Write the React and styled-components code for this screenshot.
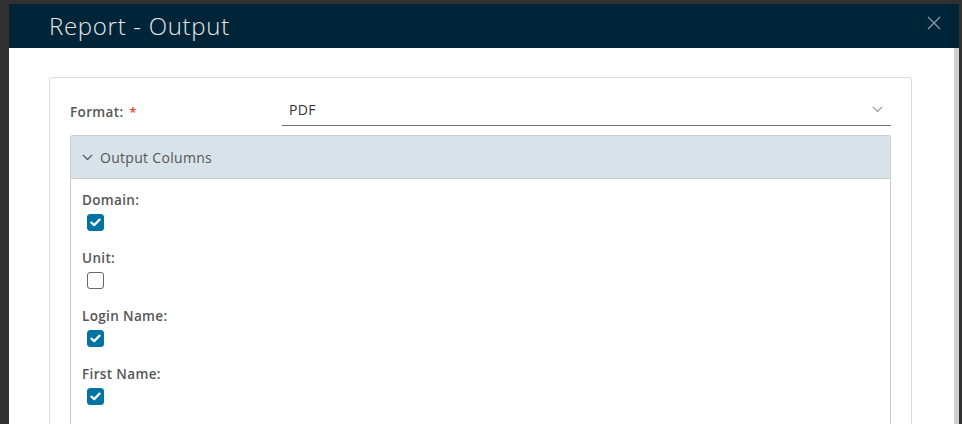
import React from "react";
import styled, { createGlobalStyle } from "styled-components";

const GlobalStyle = createGlobalStyle`
  html, body {
    margin: 0;
    padding: 0;
    background: #313131;
    height: 100%;
    overflow: hidden;
  }
  body {
    font-family: "Open Sans", "Noto Sans", sans-serif;
  }
`;

const columns = [
  { label: "Domain:", checked: true },
  { label: "Unit:", checked: false },
  { label: "Login Name:", checked: true },
  { label: "First Name:", checked: true },
];

const CheckIcon = () => (
  <svg width="11" height="9" viewBox="0 0 10 8" fill="none">
    <path
      d="M1.3 4.1 L3.8 6.4 L8.7 1.4"
      stroke="#fff"
      strokeWidth="2"
      strokeLinecap="round"
      strokeLinejoin="round"
    />
  </svg>
);

const Chevron = ({ size = 10, color = "#565656" }) => (
  <svg width={size} height={size * 0.6} viewBox="0 0 10 6" fill="none">
    <path d="M0.8 0.8 L5 5 L9.2 0.8" stroke={color} strokeWidth="1.2" />
  </svg>
);

const App = () => {
  return (
    <>
      <GlobalStyle />
      <Modal>
        <Header>
          <Title>Report - Output</Title>
          <Close aria-label="close">
            <svg width="14" height="14" viewBox="0 0 14 14">
              <path d="M1 1 L13 13 M13 1 L1 13" stroke="#8a969d" strokeWidth="1.4" />
            </svg>
          </Close>
        </Header>
        <Body>
          <Content>
            <Card>
              <FormRow>
                <Label>
                  Format: <Required>*</Required>
                </Label>
                <Select>
                  <span>PDF</span>
                  <Chevron size={11} color="#9aa5ab" />
                </Select>
              </FormRow>
              <Accordion>
                <AccordionHeader>
                  <Chevron size={11} />
                  <span>Output Columns</span>
                </AccordionHeader>
                <AccordionBody>
                  {columns.map((c) => (
                    <Field key={c.label}>
                      <FieldLabel>{c.label}</FieldLabel>
                      <Checkbox $checked={c.checked}>
                        {c.checked && <CheckIcon />}
                      </Checkbox>
                    </Field>
                  ))}
                </AccordionBody>
              </Accordion>
            </Card>
          </Content>
          <ScrollTrack />
        </Body>
      </Modal>
    </>
  );
};

export default App;

const Modal = styled.div`
  margin: 4px 0 0 9px;
  width: 950px;
  height: 420px;
  display: flex;
  flex-direction: column;
  background: #fff;
`;

const Header = styled.div`
  height: 44px;
  flex-shrink: 0;
  background: #002538;
  display: flex;
  align-items: center;
  justify-content: space-between;
  padding: 0 18px 0 40px;
`;

const Title = styled.h3`
  margin: 0 0 2px;
  font-weight: 300;
  font-size: 24px;
  color: #e8e8e8;
  letter-spacing: 0.7px;
`;

const Close = styled.div`
  display: flex;
  align-items: center;
  margin-top: -6px;
`;

const Body = styled.div`
  flex: 1;
  display: flex;
  overflow: hidden;
`;

const Content = styled.div`
  flex: 1;
  display: flex;
  padding: 29px 42px 0 40px;
`;

const ScrollTrack = styled.div`
  width: 5px;
  background: #d0d0d0;
`;

const Card = styled.div`
  flex: 1;
  display: flex;
  flex-direction: column;
  border: 1px solid #dcdcdc;
  border-bottom: none;
  border-radius: 3px 3px 0 0;
  padding: 12px 20px 0 20px;
`;

const FormRow = styled.div`
  display: flex;
  align-items: flex-end;
  height: 36px;
`;

const Label = styled.label`
  width: 212px;
  font-size: 13.5px;
  font-weight: 600;
  letter-spacing: 0.35px;
  color: #565656;
  padding-bottom: 5px;
`;

const Required = styled.span`
  color: #e12200;
  font-weight: 400;
  margin-left: 2px;
`;

const Select = styled.div`
  flex: 1;
  display: flex;
  align-items: center;
  justify-content: space-between;
  height: 28px;
  border-bottom: 1px solid #737373;
  padding: 0 8px 2px 7px;
  font-size: 14px;
  letter-spacing: 0.3px;
  color: #333;
`;

const Accordion = styled.div`
  flex: 1;
  margin-top: 9px;
  border: 1px solid #ccc;
  border-bottom: none;
  border-radius: 3px 3px 0 0;
`;

const AccordionHeader = styled.div`
  height: 42px;
  background: #d8e3e9;
  border-bottom: 1px solid #ccc;
  display: flex;
  align-items: center;
  gap: 7px;
  padding: 0 11px;
  font-size: 14px;
  letter-spacing: 0.3px;
  color: #565656;
`;

const AccordionBody = styled.div`
  padding: 12px 11px 0;
  display: flex;
  flex-direction: column;
  gap: 18px;
`;

const Field = styled.div`
  display: flex;
  flex-direction: column;
  gap: 5px;
`;

const FieldLabel = styled.div`
  font-size: 13.5px;
  line-height: 18px;
  font-weight: 600;
  letter-spacing: 0.35px;
  color: #565656;
`;

const Checkbox = styled.div`
  width: 17px;
  height: 17px;
  margin-left: 5px;
  box-sizing: border-box;
  border-radius: 3px;
  display: flex;
  align-items: center;
  justify-content: center;
  background: ${(p) => (p.$checked ? "#0072a3" : "#fff")};
  border: 1px solid ${(p) => (p.$checked ? "#0072a3" : "#666")};
`;
